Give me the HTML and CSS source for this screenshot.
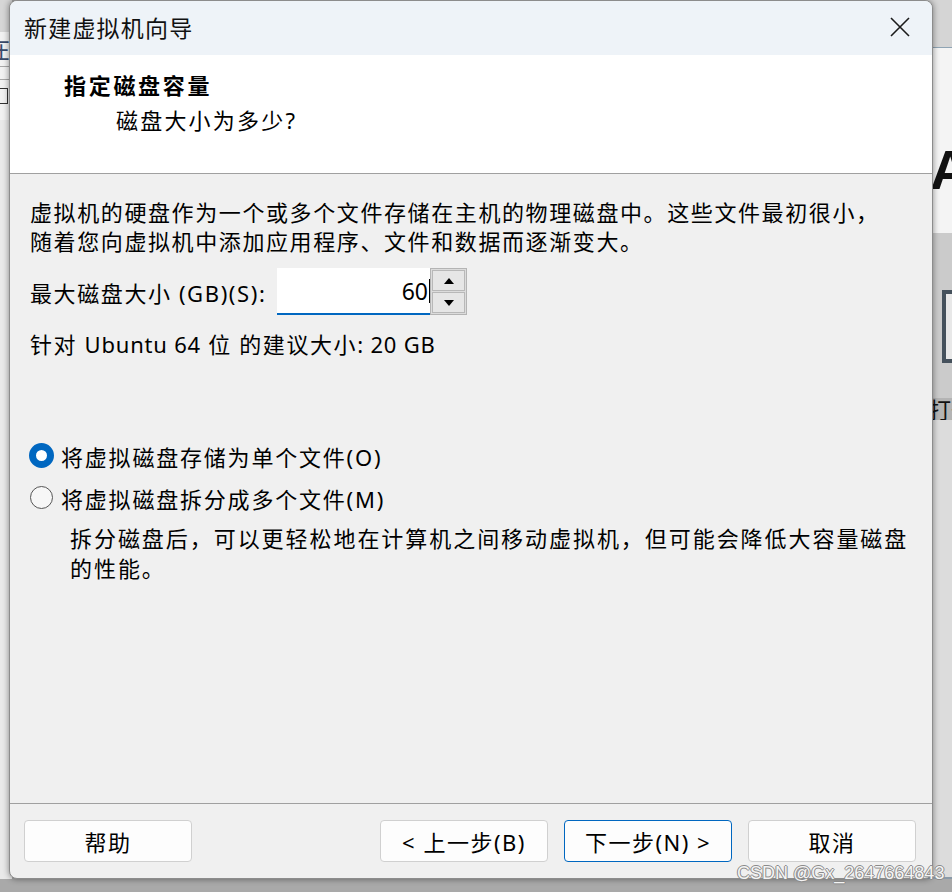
FILE: index.html
```html
<!DOCTYPE html>
<html lang="zh-CN">
<head>
    <meta charset="UTF-8">
    <meta name="viewport" content="width=device-width, initial-scale=1.0">
    <title>新建虚拟机向导</title>
    <link rel="stylesheet" href="styles.css">
</head>
<body>

<div class="desktop">
    <!-- Parts of the window behind the dialog -->
    <div class="back-left">
        <div class="bl-top"></div>
        <div class="bl-row bl-char">在</div>
        <div class="bl-row bl-line"></div>
        <div class="bl-row bl-box"><span></span></div>
        <div class="bl-rest"></div>
    </div>
    <div class="back-right">
        <div class="br-top"></div>
        <div class="br-white"><span class="big-a">A</span></div>
        <div class="br-gray">
            <div class="br-frame"></div>
        </div>
        <div class="br-band"><span class="br-text">打开</span></div>
        <div class="br-light"></div>
    </div>
    <div class="back-bottom"></div>

    <!-- The Dialog -->
    <div class="dialog">
        <div class="titlebar">
            <span class="title">新建虚拟机向导</span>
            <svg class="close" width="20" height="20" viewBox="0 0 20 20">
                <path d="M1 1 L19 19 M19 1 L1 19" stroke="#1b1b1b" stroke-width="1.6" fill="none"/>
            </svg>
        </div>

        <div class="header">
            <div class="header-title">指定磁盘容量</div>
            <div class="header-sub">磁盘大小为多少?</div>
        </div>

        <div class="content">
            <p class="intro">虚拟机的硬盘作为一个或多个文件存储在主机的物理磁盘中。这些文件最初很小，<br>随着您向虚拟机中添加应用程序、文件和数据而逐渐变大。</p>

            <div class="size-row">
                <label for="size">最大磁盘大小 <span class="latin wide">(GB)(S):</span></label>
                <div class="spinner">
                    <div class="spin-input"><span id="size">60</span><i class="caret"></i></div>
                    <div class="spin-buttons">
                        <div class="spin-btn"><span class="arrow-up"></span></div>
                        <div class="spin-btn"><span class="arrow-down"></span></div>
                    </div>
                </div>
            </div>

            <p class="hint">针对 <span class="latin">Ubuntu 64</span> 位 的建议大小<span class="latin">: 20 GB</span></p>

            <div class="options">
                <div class="radio-row">
                    <span class="radio checked"></span>
                    <span>将虚拟磁盘存储为单个文件(O)</span>
                </div>
                <div class="radio-row">
                    <span class="radio"></span>
                    <span>将虚拟磁盘拆分成多个文件(M)</span>
                </div>
                <p class="option-note">拆分磁盘后，可以更轻松地在计算机之间移动虚拟机，但可能会降低大容量磁盘<br>的性能。</p>
            </div>
        </div>

        <div class="footer">
            <button class="btn">帮助</button>
            <div class="footer-right">
                <button class="btn">&lt; 上一步(B)</button>
                <button class="btn default">下一步(N) &gt;</button>
                <button class="btn">取消</button>
            </div>
        </div>
    </div>

    <div class="watermark">CSDN @Gx_2647664843</div>
</div>

</body>
</html>
```

FILE: styles.css
```css
body {
    margin: 0;
    font-family: "Noto Sans", "Noto Sans CJK SC", sans-serif;
    background-color: #a9a9a9;
}
.desktop {
    position: relative;
    width: 952px;
    height: 892px;
    overflow: hidden;
    background-color: #a9a9a9;
}

/* Background window pieces */
.back-left {
    position: absolute;
    left: 0;
    top: 0;
    width: 12px;
    height: 879px;
    display: flex;
    flex-direction: column;
    background-color: #e4e4e4;
}
.bl-top {
    height: 32px;
    background-color: #d6d6d6;
}
.bl-row {
    border-bottom: 1px solid #a8a8a8;
    background-color: #f2f2f2;
}
.bl-char {
    height: 34px;
    font-size: 24px;
    line-height: 34px;
    color: #3a4a6a;
    margin-left: -14px;
    overflow: hidden;
}
.bl-line {
    height: 12px;
}
.bl-box {
    height: 40px;
    border-bottom: none;
}
.bl-box span {
    display: block;
    width: 14px;
    height: 14px;
    margin: 8px 0 0 -8px;
    border: 1px solid #333;
}
.bl-rest {
    flex: 1;
    background-color: #e9e9e9;
}
.back-right {
    position: absolute;
    left: 920px;
    top: 0;
    width: 32px;
    height: 879px;
    display: flex;
    flex-direction: column;
}
.br-top {
    height: 47px;
    background-color: #d5d5d5;
    border-bottom: 1px solid #8fa4b4;
}
.br-white {
    height: 185px;
    background-color: #f4f4f4;
    position: relative;
    overflow: hidden;
}
.big-a {
    position: absolute;
    left: 10px;
    top: 92px;
    font-family: "Liberation Sans", sans-serif;
    font-weight: bold;
    font-size: 56px;
    line-height: 60px;
    color: #111;
}
.br-gray {
    height: 165px;
    background-color: #cbcbcb;
    position: relative;
    overflow: hidden;
}
.br-frame {
    position: absolute;
    left: 22px;
    top: 57px;
    width: 40px;
    height: 65px;
    border: 4px solid #45515c;
    background-color: #e8e8e8;
}
.br-band {
    height: 22px;
    background-color: #b4b4b4;
    overflow: hidden;
    white-space: nowrap;
}
.br-text {
    display: block;
    padding-left: 9px;
    font-size: 22px;
    line-height: 22px;
    color: #111;
}
.br-light {
    flex: 1;
    background-color: #dcdcdc;
    border-bottom: 2px solid #8a9aa8;
}
.back-bottom {
    position: absolute;
    left: 0;
    top: 879px;
    width: 952px;
    height: 13px;
    background-color: #a9a9a9;
}

/* Dialog */
.dialog {
    position: absolute;
    left: 9px;
    top: 0;
    width: 922px;
    height: 877px;
    border: 1px solid #8c8c8c;
    border-radius: 8px;
    overflow: hidden;
    display: flex;
    flex-direction: column;
    background-color: #f0f0f0;
    box-shadow: 0 0 6px rgba(0,0,0,0.45);
}
.titlebar {
    height: 54px;
    flex: none;
    background-color: #eef3f8;
    display: flex;
    align-items: center;
    justify-content: space-between;
    padding: 0 22px 0 14px;
}
.title {
    font-size: 23px;
    letter-spacing: 1.2px;
    color: #111;
    margin-top: -3px;
}
.close {
    margin-top: -2px;
}
.header {
    height: 119px;
    flex: none;
    box-sizing: border-box;
    background-color: #fff;
    border-bottom: 1px solid #a0a0a0;
    padding: 15px 0 0 54px;
}
.header-title {
    font-size: 22px;
    font-weight: bold;
    letter-spacing: 2.7px;
    line-height: 30px;
    color: #000;
}
.header-sub {
    font-size: 22px;
    letter-spacing: 2.2px;
    line-height: 30px;
    margin: 5px 0 0 52px;
    color: #000;
}
.content {
    flex: 1;
    padding: 24px 20px 0 20px;
    font-size: 22px;
    letter-spacing: 1.6px;
    color: #000;
}
.content p {
    margin: 0;
}
.latin {
    letter-spacing: 0.8px;
}
.latin.wide {
    letter-spacing: 1.6px;
}
.intro {
    line-height: 29px;
}
.size-row {
    display: flex;
    align-items: center;
    margin-top: 12px;
    height: 47px;
}
.size-row label {
    width: 247px;
    white-space: nowrap;
}
.spinner {
    display: flex;
    height: 47px;
}
.spin-input {
    width: 153px;
    height: 45px;
    background-color: #fff;
    border-bottom: 2px solid #0067c0;
    display: flex;
    align-items: center;
    justify-content: flex-end;
    letter-spacing: 0;
    font-size: 23px;
}
.caret {
    display: block;
    width: 1px;
    height: 24px;
    margin: 0 0 0 1px;
    background-color: #000;
}
.spin-buttons {
    width: 33px;
    border: 1px solid #b4b4b4;
    background-color: #dcdcdc;
    display: flex;
    flex-direction: column;
    gap: 1px;
    padding: 1px;
}
.spin-btn {
    flex: 1;
    background-color: #e6e6e6;
    border: 1px solid #b8b8b8;
    display: flex;
    align-items: center;
    justify-content: center;
}
.arrow-up,
.arrow-down {
    width: 0;
    height: 0;
    border-left: 5px solid transparent;
    border-right: 5px solid transparent;
}
.arrow-up {
    border-bottom: 6px solid #000;
}
.arrow-down {
    border-top: 6px solid #000;
}
.hint {
    line-height: 29px;
    margin-top: 15px !important;
}
.options {
    margin-top: 82px;
}
.radio-row {
    display: flex;
    align-items: center;
    height: 29px;
    margin-bottom: 13px;
    letter-spacing: 1.8px;
}
.radio {
    width: 23px;
    height: 23px;
    border: 1px solid #555;
    border-radius: 50%;
    box-sizing: border-box;
    margin-right: 8px;
    background-color: #f7f7f7;
    flex: none;
}
.radio.checked {
    border: 7px solid #0067c0;
    background-color: #fff;
    width: 25px;
    height: 25px;
    margin: 0 7px 0 -1px;
}
.option-note {
    margin: -2px 0 0 40px !important;
    line-height: 30px;
    letter-spacing: 1.95px;
}
.footer {
    height: 75px;
    flex: none;
    box-sizing: border-box;
    border-top: 1px solid #a0a0a0;
    display: flex;
    justify-content: space-between;
    padding: 16px 16px 0 14px;
}
.footer-right {
    display: flex;
    gap: 16px;
}
.btn {
    width: 168px;
    height: 42px;
    border: 1px solid #d0d0d0;
    border-radius: 4px;
    background-color: #fdfdfd;
    font-family: "Noto Sans", "Noto Sans CJK SC", sans-serif;
    font-size: 22px;
    letter-spacing: 1.5px;
    color: #000;
    padding: 0;
}
.btn.default {
    border-color: #0067c0;
}

.watermark {
    position: absolute;
    left: 737px;
    top: 862px;
    font-family: "Liberation Sans", sans-serif;
    font-size: 18px;
    line-height: 22px;
    color: #f4f4f4;
    text-shadow: 1px 0 0 #8a8a8a, -1px 0 0 #8a8a8a, 0 1px 0 #8a8a8a, 0 -1px 0 #8a8a8a;
}
```
